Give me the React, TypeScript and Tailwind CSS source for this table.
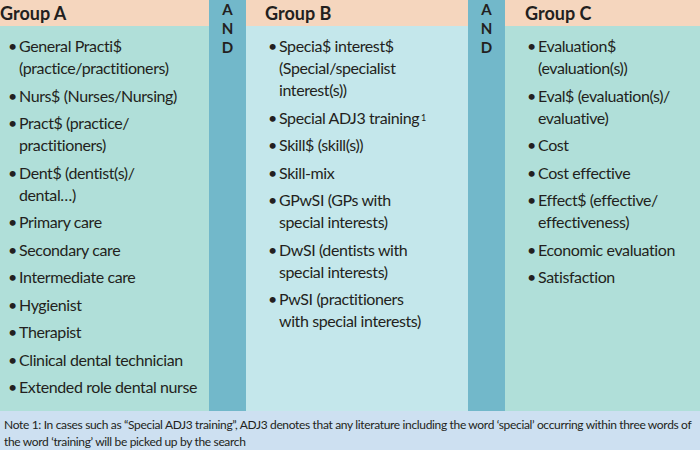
import React from "react";

type Item = string[];

const groupA: Item[] = [
  ["General Practi$", "(practice/practitioners)"],
  ["Nurs$ (Nurses/Nursing)"],
  ["Pract$ (practice/", "practitioners)"],
  ["Dent$ (dentist(s)/", "dental…)"],
  ["Primary care"],
  ["Secondary care"],
  ["Intermediate care"],
  ["Hygienist"],
  ["Therapist"],
  ["Clinical dental technician"],
  ["Extended role dental nurse"],
];

const groupB: Item[] = [
  ["Specia$ interest$", "(Special/specialist", "interest(s))"],
  ["Special ADJ3 training¹"],
  ["Skill$ (skill(s))"],
  ["Skill-mix"],
  ["GPwSI (GPs with", "special interests)"],
  ["DwSI (dentists with", "special interests)"],
  ["PwSI (practitioners", "with special interests)"],
];

const groupC: Item[] = [
  ["Evaluation$", "(evaluation(s))"],
  ["Eval$ (evaluation(s)/", "evaluative)"],
  ["Cost"],
  ["Cost effective"],
  ["Effect$ (effective/", "effectiveness)"],
  ["Economic evaluation"],
  ["Satisfaction"],
];

function renderLine(line: string) {
  if (line.endsWith("¹")) {
    return (
      <>
        {line.slice(0, -1)}
        <sup className="text-[9px] relative top-[-3px] ml-[2px]">1</sup>
      </>
    );
  }
  return line;
}

function Column({
  title,
  items,
  bodyBg,
  className,
  titlePad,
  listPad,
}: {
  title: string;
  items: Item[];
  bodyBg: string;
  className: string;
  titlePad: string;
  listPad: string;
}) {
  return (
    <div className={`flex flex-col ${className}`}>
      <div
        className={`h-[26px] bg-[#f5d6be] flex items-center ${titlePad} text-[18px] font-bold text-[#231f20]`}
      >
        {title}
      </div>
      <div className={`flex-1 ${bodyBg} ${listPad} pt-[9px]`}>
        <ul className="flex flex-col gap-[5.5px]">
          {items.map((it, i) => (
            <li
              key={i}
              className="flex text-[16px] leading-[22px] tracking-[-0.4px] text-[#231f20]"
            >
              <span className="w-[11px] shrink-0">•</span>
              <span className="flex flex-col">
                {it.map((l, j) => (
                  <span key={j} className="whitespace-nowrap">
                    {renderLine(l)}
                  </span>
                ))}
              </span>
            </li>
          ))}
        </ul>
      </div>
    </div>
  );
}

function And() {
  return (
    <div className="w-[37px] shrink-0 bg-[#72b8ca] flex flex-col items-center text-[15px] leading-[19px] font-bold text-[#231f20]">
      <span>A</span>
      <span>N</span>
      <span>D</span>
    </div>
  );
}

export default function App() {
  return (
    <div
      className="w-[700px] h-[450px] flex flex-col overflow-hidden"
      style={{ fontFamily: "Lato, 'Noto Sans', sans-serif" }}
    >
      <div className="flex h-[413px]">
        <Column
          title="Group A"
          items={groupA}
          bodyBg="bg-[#b0dfd9]"
          className="w-[209px] shrink-0"
          titlePad="pl-0"
          listPad="pl-[8px]"
        />
        <And />
        <Column
          title="Group B"
          items={groupB}
          bodyBg="bg-[#c4e7eb]"
          className="w-[222px] shrink-0"
          titlePad="pl-[19px]"
          listPad="pl-[22px]"
        />
        <And />
        <Column
          title="Group C"
          items={groupC}
          bodyBg="bg-[#b0dfd9]"
          className="flex-1"
          titlePad="pl-[20px]"
          listPad="pl-[22px]"
        />
      </div>
      <div className="flex-1 bg-[#cde0f1] px-[4px] pt-[5px] text-[12px] leading-[17px] tracking-[-0.34px] text-[#231f20]">
        <div className="whitespace-nowrap">
          Note 1: In cases such as “Special ADJ3 training”, ADJ3 denotes that any literature including the word ‘special’ occurring within three words of
        </div>
        <div className="whitespace-nowrap">the word ‘training’ will be picked up by the search</div>
      </div>
    </div>
  );
}
